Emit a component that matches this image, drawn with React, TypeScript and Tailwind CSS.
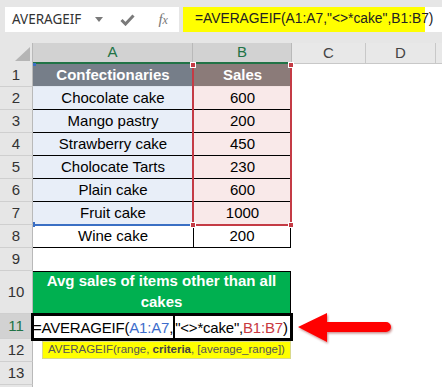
import { Fragment } from "react";

const rows = [
  { a: "Confectionaries", b: "Sales" },
  { a: "Chocolate cake", b: "600" },
  { a: "Mango pastry", b: "200" },
  { a: "Strawberry cake", b: "450" },
  { a: "Cholocate Tarts", b: "230" },
  { a: "Plain cake", b: "600" },
  { a: "Fruit cake", b: "1000" },
  { a: "Wine cake", b: "200" },
];

function RowHead({ n, h, active }: { n: number; h: string; active?: boolean }) {
  return (
    <div
      className={`w-[33px] shrink-0 ${h} flex items-center justify-center border-r border-b border-r-[#b9b9b9] border-b-[#cfcfcf] text-[15px] ${
        active ? "bg-[#d2d2d2] text-[#217346]" : "bg-[#e6e6e6] text-[#333]"
      }`}
    >
      {n}
    </div>
  );
}

export default function App() {
  return (
    <div className="relative w-[442px] h-[387px] overflow-hidden bg-white font-['Liberation_Sans',Arial,sans-serif]">
      {/* Formula bar */}
      <div className="h-[43px] bg-[#e6e6e6] pt-[7px] flex">
        <div className="ml-[5px] w-[174px] h-[25px] bg-white flex items-center">
          <span className="ml-[7px] text-[13.5px] text-[#333] font-['Noto_Sans',sans-serif]">AVERAGEIF</span>
          <svg className="ml-[14px]" width="8" height="5" viewBox="0 0 8 5">
            <path d="M0 0 L8 0 L4 5 Z" fill="#7a7a7a" />
          </svg>
          <svg className="ml-[17px]" width="15" height="12" viewBox="0 0 15 12">
            <path d="M1.5 6 L5.5 10 L13.5 1.5" fill="none" stroke="#7a7a7a" strokeWidth="3" />
          </svg>
          <span className="ml-[23px] text-[15px] italic text-[#777] font-['Liberation_Serif',serif]">
            f<span className="text-[12px]">x</span>
          </span>
        </div>
        <div className="ml-[4px] flex-1 h-[25px] bg-white flex">
          <div className="w-[242px] bg-[#ffff00] flex items-center pl-[12px] whitespace-nowrap text-[13.8px] text-[#222]">
            =AVERAGEIF(A1:A7,"&lt;&gt;*cake",B1:B7)
          </div>
        </div>
      </div>

      {/* Column headers */}
      <div className="flex h-[21px] text-[15px]">
        <div className="w-[33px] shrink-0 bg-[#e6e6e6] border-r border-[#b9b9b9] flex items-end justify-end pr-[2px] pb-[3px]">
          <svg width="15" height="14" viewBox="0 0 15 14">
            <path d="M15 0 L15 14 L0 14 Z" fill="#b5b5b5" />
          </svg>
        </div>
        <div className="w-[160px] bg-[#d2d2d2] text-[#217346] border-r border-[#b9b9b9] border-b-2 border-b-[#217346] flex items-center justify-center">
          A
        </div>
        <div className="w-[99px] bg-[#d2d2d2] text-[#217346] border-r border-[#b9b9b9] border-b-2 border-b-[#217346] flex items-center justify-center">
          B
        </div>
        <div className="w-[74px] bg-[#e8e8e8] text-[#444] border-r border-b border-[#c8c8c8] flex items-center justify-center">
          C
        </div>
        <div className="w-[70px] bg-[#e8e8e8] text-[#444] border-r border-b border-[#c8c8c8] flex items-center justify-center">
          D
        </div>
        <div className="flex-1 bg-[#e8e8e8] border-b border-[#c8c8c8]" />
      </div>

      {/* Data rows 1-8 */}
      {rows.map((r, i) => {
        const head = i === 0;
        const plain = i === 7;
        return (
          <div key={i} className="flex h-[23px] text-[15px]">
            <RowHead n={i + 1} h="h-[23px]" />
            <div
              className={`w-[160px] flex items-center justify-center border-b ${
                head
                  ? "bg-[#767e89] text-white font-bold border-b-[#dfe6ef]"
                  : plain
                  ? "bg-white text-black border-b-black"
                  : "bg-[#e8eef8] text-black border-b-black"
              }`}
            >
              {r.a}
            </div>
            <div
              className={`w-[98px] flex items-center justify-center border-b border-l ${
                head
                  ? "bg-[#8b7b79] text-white font-bold border-b-[#f3e3e3] border-l-black"
                  : plain
                  ? "bg-white text-black border-b-black border-l-black border-r border-r-black"
                  : "bg-[#f9e9e9] text-black border-b-black border-l-black"
              }`}
            >
              {r.b}
            </div>
          </div>
        );
      })}

      {/* Row 9 */}
      <div className="flex h-[23px]">
        <RowHead n={9} h="h-[23px]" />
      </div>

      {/* Row 10 */}
      <div className="flex h-[43px]">
        <RowHead n={10} h="h-[43px]" />
        <div className="w-[258px] bg-[#00b050] border border-black border-l-0 flex items-end justify-center text-center text-white font-bold text-[15px] leading-[21px] pb-[1px] px-[6px]">
          Avg sales of items other than all cakes
        </div>
      </div>

      {/* Row 11 - edit mode */}
      <div className="flex h-[25px]">
        <RowHead n={11} h="h-[25px]" active />
        <div className="-ml-[2px] -mt-[1px] w-[262px] h-[28px] border-[3px] border-black bg-white flex items-center whitespace-nowrap text-[15px] leading-none tracking-[-0.2px] z-10">
          <span className="-ml-[1px]">=AVERAGEIF(</span>
          <span className="text-[#3d6dcc]">A1:A7</span>
          <span>,</span>
          <span className="w-[2px] h-full bg-black" />
          <span>"&lt;&gt;*cake",</span>
          <span className="text-[#c8383f]">B1:B7</span>
          <span>)</span>
        </div>
      </div>

      {/* Row 12 - tooltip */}
      <div className="flex h-[23px]">
        <RowHead n={12} h="h-[23px]" />
        <div className="ml-[9px] mt-[2px] h-[18px] px-[5px] bg-[#ffff00] border border-[#d9d98c] flex items-center whitespace-pre text-[11.5px] text-[#555]">
          AVERAGEIF(range, <b className="text-[#444]">criteria</b>, [average_range])
        </div>
      </div>

      {/* Row 13 */}
      <div className="flex h-[23px]">
        <RowHead n={13} h="h-[23px]" />
      </div>
      <div className="flex h-[10px]">
        <div className="w-[33px] bg-[#e6e6e6] border-r border-[#b9b9b9]" />
      </div>

      {/* Reference highlights */}
      <div className="absolute left-[34px] top-[224px] w-[158px] h-[2px] bg-[#3a6fc4]" />
      <div className="absolute left-[33px] top-[222px] w-[2px] h-[5px] bg-[#3a6fc4]" />
      <div className="absolute left-[33px] top-[63px] w-[3px] h-[3px] bg-[#3a6fc4]" />
      <div className="absolute left-[192px] top-[64px] w-[2px] h-[162px] bg-[#c43b45]" />
      <div className="absolute left-[290px] top-[64px] w-[2px] h-[162px] bg-[#c43b45]" />
      <div className="absolute left-[192px] top-[224px] w-[99px] h-[2px] bg-[#c43b45]" />
      {[
        [190, 62],
        [288, 62],
        [190, 222],
        [288, 222],
      ].map(([x, y], k) => (
        <Fragment key={k}>
          <div
            className="absolute w-[6px] h-[6px] bg-[#c43b45] border border-white"
            style={{ left: x, top: y }}
          />
        </Fragment>
      ))}

      {/* Red arrow */}
      <svg className="absolute left-[294px] top-[309px]" width="102" height="40" viewBox="0 0 102 40">
        <defs>
          <filter id="sh" x="-10%" y="-20%" width="130%" height="150%">
            <feDropShadow dx="1" dy="1.5" stdDeviation="1" floodColor="#800000" floodOpacity="0.45" />
          </filter>
        </defs>
        <path
          d="M4 18 L33 4 L33 13 L92 13 A5 5 0 0 1 92 23 L33 23 L33 33 Z"
          fill="#ff0000"
          filter="url(#sh)"
        />
      </svg>
    </div>
  );
}
